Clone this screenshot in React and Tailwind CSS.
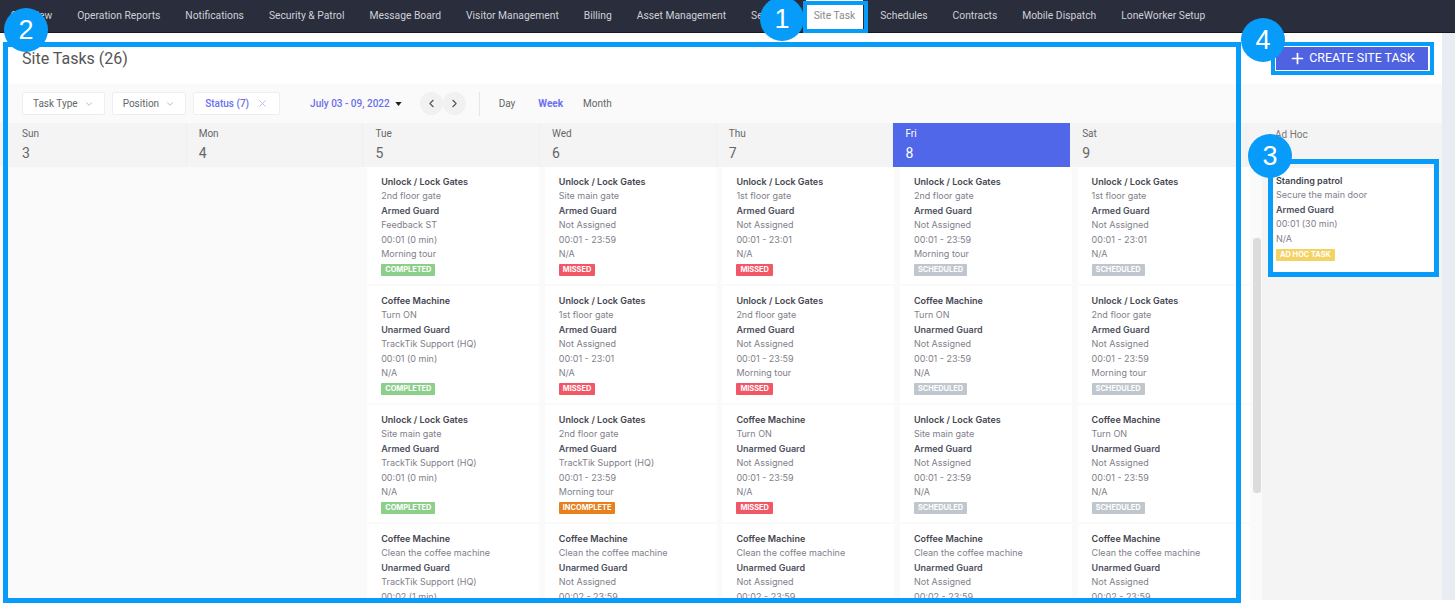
import React from "react";
import { ChevronDown, ChevronLeft, ChevronRight, Plus, X } from "lucide-react";

const NAV_ITEMS = [
  "Overview",
  "Operation Reports",
  "Notifications",
  "Security & Patrol",
  "Message Board",
  "Visitor Management",
  "Billing",
  "Asset Management",
  "Settings",
  "Site Task",
  "Schedules",
  "Contracts",
  "Mobile Dispatch",
  "LoneWorker Setup",
];

const DAYS = [
  { name: "Sun", date: 3 },
  { name: "Mon", date: 4 },
  { name: "Tue", date: 5 },
  { name: "Wed", date: 6 },
  { name: "Thu", date: 7 },
  { name: "Fri", date: 8, active: true },
  { name: "Sat", date: 9 },
];

const BADGES = {
  COMPLETED: "bg-[#8ccf8a]",
  MISSED: "bg-[#f25767]",
  INCOMPLETE: "bg-[#e8801e]",
  SCHEDULED: "bg-[#c0c6cd]",
  "AD HOC TASK": "bg-[#f5d264]",
};

const GATE = "Unlock / Lock Gates";
const COFFEE = "Coffee Machine";
const ARMED = "Armed Guard";
const UNARMED = "Unarmed Guard";
const NONE = "Not Assigned";
const HQ = "TrackTik Support (HQ)";
const CLEAN = "Clean the coffee machine";

const COLUMNS = [
  [],
  [],
  [
    [GATE, "2nd floor gate", ARMED, "Feedback ST", "00:01 (0 min)", "Morning tour", "COMPLETED"],
    [COFFEE, "Turn ON", UNARMED, HQ, "00:01 (0 min)", "N/A", "COMPLETED"],
    [GATE, "Site main gate", ARMED, HQ, "00:01 (0 min)", "N/A", "COMPLETED"],
    [COFFEE, CLEAN, UNARMED, HQ, "00:02 (1 min)", "N/A", "COMPLETED"],
  ],
  [
    [GATE, "Site main gate", ARMED, NONE, "00:01 - 23:59", "N/A", "MISSED"],
    [GATE, "1st floor gate", ARMED, NONE, "00:01 - 23:01", "N/A", "MISSED"],
    [GATE, "2nd floor gate", ARMED, HQ, "00:01 - 23:59", "Morning tour", "INCOMPLETE"],
    [COFFEE, CLEAN, UNARMED, NONE, "00:02 - 23:59", "N/A", "MISSED"],
  ],
  [
    [GATE, "1st floor gate", ARMED, NONE, "00:01 - 23:01", "N/A", "MISSED"],
    [GATE, "2nd floor gate", ARMED, NONE, "00:01 - 23:59", "Morning tour", "MISSED"],
    [COFFEE, "Turn ON", UNARMED, NONE, "00:01 - 23:59", "N/A", "MISSED"],
    [COFFEE, CLEAN, UNARMED, NONE, "00:02 - 23:59", "N/A", "MISSED"],
  ],
  [
    [GATE, "2nd floor gate", ARMED, NONE, "00:01 - 23:59", "Morning tour", "SCHEDULED"],
    [COFFEE, "Turn ON", UNARMED, NONE, "00:01 - 23:59", "N/A", "SCHEDULED"],
    [GATE, "Site main gate", ARMED, NONE, "00:01 - 23:59", "N/A", "SCHEDULED"],
    [COFFEE, CLEAN, UNARMED, NONE, "00:02 - 23:59", "N/A", "SCHEDULED"],
  ],
  [
    [GATE, "1st floor gate", ARMED, NONE, "00:01 - 23:01", "N/A", "SCHEDULED"],
    [GATE, "2nd floor gate", ARMED, NONE, "00:01 - 23:59", "Morning tour", "SCHEDULED"],
    [COFFEE, "Turn ON", UNARMED, NONE, "00:01 - 23:59", "N/A", "SCHEDULED"],
    [COFFEE, CLEAN, UNARMED, NONE, "00:02 - 23:59", "N/A", "SCHEDULED"],
  ],
];

const Badge = ({ label }) => (
  <div
    className={`mt-[2.5px] h-[12px] w-fit rounded-[1px] px-[4px] text-[7.4px] font-bold leading-[12px] text-white ${BADGES[label]}`}
  >
    {label}
  </div>
);

const TaskCard = ({ task }) => {
  const [title, detail, role, assignee, time, note, status] = task;
  return (
    <div className="h-[117px] w-[172px] shrink-0 bg-white pl-[14px] pt-[8px] text-[9px] leading-[14.4px] text-[#7f808a]">
      <div className="font-semibold text-[#454650]">{title}</div>
      <div>{detail}</div>
      <div className="font-semibold text-[#50515e]">{role}</div>
      <div>{assignee}</div>
      <div>{time}</div>
      <div>{note}</div>
      <Badge label={status} />
    </div>
  );
};

const FilterButton = ({ label }) => (
  <button className="flex h-[23px] items-center gap-[6px] rounded-[2px] border border-[#eeeeee] bg-white px-[10px] text-[10px] text-[#666666]">
    {label}
    <ChevronDown size={10} className="text-[#b0b0b0]" />
  </button>
);

const Marker = ({ n, className }) => (
  <div
    className={`absolute flex h-[44px] w-[44px] items-center justify-center rounded-full bg-[#079cfa] text-[27px] text-white ${className}`}
    style={{ fontFamily: '"Liberation Sans", sans-serif' }}
  >
    {n}
  </div>
);

export default function App() {
  return (
    <div
      className="relative h-[616px] w-[1455px] overflow-hidden bg-white"
      style={{ fontFamily: 'Inter, "Liberation Sans", sans-serif' }}
    >
      {/* nav */}
      <div
        className="flex h-[33px] items-center gap-[25px] border-b border-[#16171f] bg-[#2a2d3c] pl-[10.5px] text-[10.3px] text-[#cfd0d6]"
        style={{ fontFamily: "Roboto, sans-serif" }}
      >
        {NAV_ITEMS.map((item) =>
          item === "Site Task" ? (
            <div
              key={item}
              className="-mx-[8px] flex h-full items-center whitespace-nowrap bg-white px-[8px] text-[#8a8a8a]"
            >
              {item}
            </div>
          ) : (
            <div key={item} className="whitespace-nowrap">
              {item}
            </div>
          )
        )}
      </div>

      <div className="flex h-[567px]">
        <div className="flex w-[1442px] flex-col" style={{ fontFamily: "Roboto, sans-serif" }}>
          {/* header */}
          <div className="flex h-[51px] items-center justify-between pl-[22px] pr-[14px]">
            <h1 className="text-[16px] font-normal text-[#555555]">Site Tasks (26)</h1>
            <button className="flex h-[23px] w-[152px] items-center justify-center gap-[3px] bg-[#4f63e0] text-[12.4px] text-white">
              <Plus size={17} strokeWidth={2.4} />
              CREATE SITE TASK
            </button>
          </div>

          {/* toolbar */}
          <div className="flex h-[39px] items-center bg-[#fafafa] pl-[22px] text-[10px]">
            <div className="flex gap-[7px]">
              <FilterButton label="Task Type" />
              <FilterButton label="Position" />
              <button className="flex h-[23px] items-center gap-[8px] rounded-[2px] border border-[#eeeeee] bg-white px-[11px] text-[10px] font-medium text-[#6a70ee]">
                Status (7)
                <X size={11} className="text-[#b4b8f0]" />
              </button>
            </div>
            <div className="ml-[30px] flex items-center font-medium text-[#6a70ee]">
              July 03 - 09, 2022
              <svg viewBox="0 0 8 5" className="ml-[5px] h-[4px] w-[7px] fill-[#222222]">
                <path d="M0 0h8L4 5z" />
              </svg>
            </div>
            <div className="ml-[18px] flex">
              <div className="flex h-[23px] w-[23px] items-center justify-center rounded-full bg-[#f1f1f1] text-[#555555]">
                <ChevronLeft size={13} />
              </div>
              <div className="flex h-[23px] w-[23px] items-center justify-center rounded-full bg-[#f1f1f1] text-[#555555]">
                <ChevronRight size={13} />
              </div>
            </div>
            <div className="ml-[13px] h-[24px] w-px bg-[#e6e6e6]" />
            <div className="ml-[19px] flex text-[#666666]">
              <span>Day</span>
              <span className="ml-[23px] font-bold text-[#6a70ee]">Week</span>
              <span className="ml-[20px]">Month</span>
            </div>
          </div>

          {/* calendar */}
          <div className="flex h-[477px]">
            <div className="flex w-[1262px] flex-col">
              <div className="flex h-[44px] shrink-0 bg-[#f4f4f4] pl-[10px]">
                {DAYS.map((day) => (
                  <div
                    key={day.name}
                    className={`w-[176.7px] pl-[12px] pt-[5px] ${
                      day.active
                        ? "bg-[#4f67e8] text-white"
                        : "border-r border-[#efefef] text-[#666666]"
                    }`}
                  >
                    <div className="text-[10px] leading-[12px]">{day.name}</div>
                    <div className="mt-[3px] text-[14px] leading-[20px]">{day.date}</div>
                  </div>
                ))}
              </div>
              <div
                className="flex min-h-0 flex-1 overflow-hidden bg-[#fafafa] pl-[11px]"
                style={{ fontFamily: "Inter, sans-serif" }}
              >
                {COLUMNS.map((tasks, i) => (
                  <div key={i} className="flex w-[177.6px] shrink-0 flex-col gap-[2px] pl-[1px]">
                    {tasks.map((task, j) => (
                      <TaskCard key={j} task={task} />
                    ))}
                  </div>
                ))}
                <div className="relative w-[8px] shrink-0">
                  <div className="absolute left-[-1px] top-[71px] h-[255px] w-[8px] rounded-[3px] bg-[#dcdcdc]" />
                </div>
              </div>
            </div>

            {/* ad hoc */}
            <div className="flex-1 bg-[#f4f4f4]">
              <div className="pl-[13px] pt-[4px] text-[10px] text-[#777777]">Ad Hoc</div>
              <div
                className="ml-[7px] mt-[26px] h-[107px] w-[170px] border-b border-[#e4e4e4] bg-white pl-[7px] pt-[6px] text-[9px] leading-[14.4px] text-[#7f808a]"
                style={{ fontFamily: "Inter, sans-serif" }}
              >
                <div className="font-semibold text-[#454650]">Standing patrol</div>
                <div>Secure the main door</div>
                <div className="font-semibold text-[#50515e]">Armed Guard</div>
                <div>00:01 (30 min)</div>
                <div>N/A</div>
                <Badge label="AD HOC TASK" />
              </div>
            </div>
          </div>
        </div>
        <div className="flex-1 bg-[#e9ecf3]" />
      </div>

      {/* tutorial highlights */}
      <div className="absolute left-[3px] top-[42px] h-[561px] w-[1238px] border-[5px] border-[#079cfa]" />
      <div className="absolute left-[803px] top-px h-[32px] w-[65px] border-[4px] border-[#079cfa]" />
      <div className="absolute left-[1268px] top-[159px] h-[118px] w-[171px] border-[5px] border-[#079cfa]" />
      <div className="absolute left-[1271px] top-[42px] h-[33px] w-[163px] border-[4px] border-[#079cfa]" />
      <Marker n={1} className="left-[760px] top-[-3px]" />
      <Marker n={2} className="left-[4px] top-[8px]" />
      <Marker n={3} className="left-[1248px] top-[134px]" />
      <Marker n={4} className="left-[1241px] top-[18px]" />
    </div>
  );
}
